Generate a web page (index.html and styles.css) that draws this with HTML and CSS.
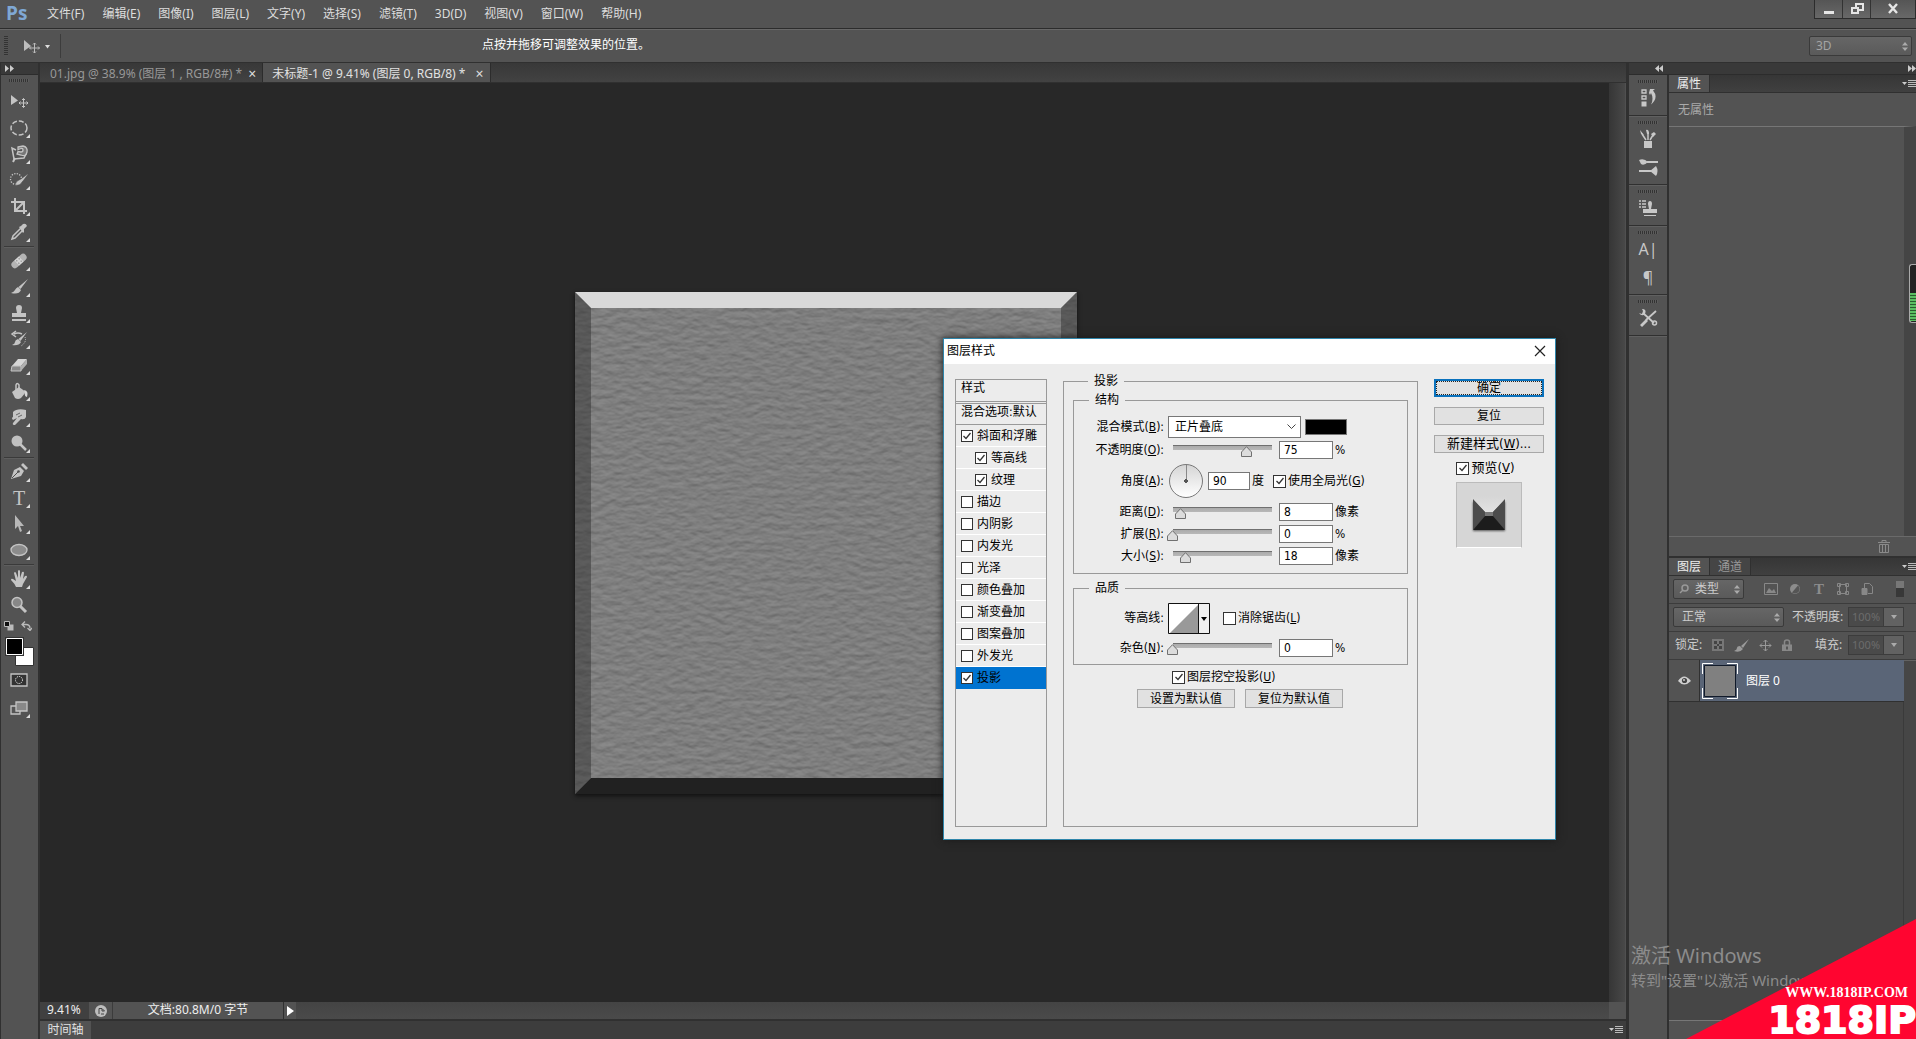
FILE: index.html
```html
<!DOCTYPE html>
<html lang="zh-CN">
<head>
<meta charset="utf-8">
<title>未标题-1 @ 9.41%</title>
<link rel="stylesheet" href="styles.css">
</head>
<body>
<div class="app">
  <header class="menubar">
    <span class="logo">Ps</span>
    <nav class="menus">
      <button>文件(F)</button><button>编辑(E)</button><button>图像(I)</button><button>图层(L)</button><button>文字(Y)</button><button>选择(S)</button><button>滤镜(T)</button><button>3D(D)</button><button>视图(V)</button><button>窗口(W)</button><button>帮助(H)</button>
    </nav>
    <div class="window-buttons">
      <button aria-label="最小化"><svg width="12" height="12"><path d="M1 9.500h10" stroke="#e6e6e6" stroke-width="3"/></svg></button>
      <button aria-label="还原"><svg width="14" height="12" fill="none" stroke="#e6e6e6" stroke-width="2"><path d="M6 5V1h7v6H9"/><path d="M2 5h6v5H2z"/></svg></button>
      <button class="wide" aria-label="关闭"><svg width="12" height="12"><path d="M2 1l8 9M10 1l-8 9" stroke="#e6e6e6" stroke-width="2.400"/></svg></button>
    </div>
  </header>

  <div class="options">
    <i class="grip-v"></i>
    <button class="current-tool" aria-label="移动工具"><svg width="32" height="16"><path d="M2 1v11l7-5z" fill="#bdbdbd"/><path d="M12.500 4v10M7.500 9h10M11 5.500L12.500 4 14 5.500M11 12.500l1.500 1.500 1.500-1.500M9 7.500L7.500 9 9 10.500M16 7.500L17.500 9 16 10.500" fill="none" stroke="#bdbdbd"/><path d="M23 6h5l-2.500 3.500z" fill="#ddd"/></svg></button>
    <p class="hint">点按并拖移可调整效果的位置。</p>
    <select class="dark-select workspace" aria-label="工作区"><option>3D</option></select>
  </div>

  <div class="main">
    <aside class="tools">
      <div class="strip"><svg width="9" height="7" fill="#ccc"><path d="M0 0l4 3.500-4 3.500zM5 0l4 3.500-4 3.500z"/></svg></div>
      <i class="grip-h"></i>
      <div class="tool-group">
        <button aria-label="移动"><svg class="ic" viewBox="0 0 20 20"><path d="M2 3v10l7-4.500z" fill="#c4c4c4"/><path d="M14.500 6.500v9M10 11h9M13 8l1.500-1.500L16 8M13 14l1.500 1.500L16 14M11.500 9.500L10 11l1.500 1.500M17.500 9.500L19 11l-1.500 1.500" fill="none" stroke="#c4c4c4"/></svg></button>
        <button class="more" aria-label="椭圆选框"><svg class="ic" viewBox="0 0 20 20"><ellipse cx="10" cy="10" rx="8" ry="7" fill="none" stroke="#c4c4c4" stroke-width="1.500" stroke-dasharray="5 2"/></svg></button>
        <button class="more" aria-label="套索"><svg class="ic" viewBox="0 0 20 20" fill="none" stroke="#c4c4c4"><path d="M7 6L3 4l2 11 10-1 2-4" stroke-width="1.500"/><path d="M9 3l5-1q5 1 4 6t-6 3l-4-1 1-2.500 3 .5q2 0 2-2t-2-1.500l-3 1z" fill="#777" stroke-width="1.300"/><path d="M6 14l-2 4" stroke-width="2"/></svg></button>
        <button class="more" aria-label="快速选择"><svg class="ic" viewBox="0 0 20 20"><circle cx="7" cy="9" r="5.500" fill="none" stroke="#c4c4c4" stroke-width="1.300" stroke-dasharray="1.300 1.300"/><path d="M20 3l-8 6-2 1q-3 1-4 5 5 1 7-3l1-1z" fill="#c4c4c4" stroke="#444" stroke-width=".5"/></svg></button>
        <button class="more" aria-label="裁剪"><svg class="ic" viewBox="0 0 20 20"><path d="M6 2v13h12M2 6h13v12M7 14l8-8" fill="none" stroke="#c4c4c4" stroke-width="2"/></svg></button>
        <button class="more" aria-label="吸管"><svg class="ic" viewBox="0 0 20 20"><path d="M3 17l1-3 8-8 2 2-8 8z" fill="none" stroke="#c4c4c4" stroke-width="1.500"/><path d="M10 5l2-1 2-2q3-1 4 2l-3 3v3l-1 1z" fill="#c4c4c4"/></svg></button>
      </div>
      <div class="tool-group">
        <button class="more" aria-label="修复画笔"><svg class="ic" viewBox="0 0 20 20"><g transform="rotate(-42 10 10)"><rect x="1" y="6.500" width="18" height="7" rx="3.500" fill="#b4b4b4"/><path d="M7 6.500h6v7H7z" fill="#d5d5d5"/><path d="M8 8.500h4M8 11.500h4" stroke="#555" stroke-dasharray="1 2"/></g></svg></button>
        <button class="more" aria-label="画笔"><svg class="ic" viewBox="0 0 20 20"><path d="M19 2l-9.500 8 2 2zM9 10l3 3q-2 5-10 3 3-1 4-3t3-3z" fill="#c4c4c4"/></svg></button>
        <button class="more" aria-label="仿制图章"><svg class="ic" viewBox="0 0 20 20"><path d="M8 10l-1-5q0-3 3-3t3 3l-1 5h5v4H3v-4zM3 16h14v2H3z" fill="#c4c4c4"/></svg></button>
        <button class="more" aria-label="历史画笔"><svg class="ic" viewBox="0 0 20 20"><path d="M18 3l-8.500 7 2 2zM9 10l3 3q-2 4-9 3 3-1 3-3t3-3z" fill="#c4c4c4"/><path d="M13 5q-4-2-8 0M7 2L3 5l4 3" fill="none" stroke="#c4c4c4" stroke-width="1.500"/><path d="M16 8q2 5-4 9" fill="none" stroke="#c4c4c4" stroke-dasharray="1 1"/></svg></button>
        <button class="more" aria-label="橡皮擦"><svg class="ic" viewBox="0 0 20 20"><path d="M9 4h9l-6 7H3z" fill="#d6d6d6"/><path d="M3 11h9v5H2z" fill="#8a8a8a" stroke="#c4c4c4"/><path d="M12 11l6-7v5l-6 7z" fill="#b0b0b0"/></svg></button>
        <button class="more" aria-label="油漆桶"><svg class="ic" viewBox="0 0 20 20"><path d="M3 11l7-5 7 5-5 6q-3 2-6 0z" fill="#c4c4c4"/><path d="M7 9V4q1-3 3 0v6" fill="none" stroke="#c4c4c4" stroke-width="1.500"/><path d="M15 9q5 1 3 7-3-1-2-4z" fill="#d6d6d6"/></svg></button>
        <button class="more" aria-label="涂抹"><svg class="ic" viewBox="0 0 20 20"><path d="M4 5q4-4 13-2v7q-1 3-5 2l-6 6q-3 0-2-2l4-5-4 2q-2-2 0-3z" fill="#c4c4c4"/><path d="M7 8l4-2M9 10l4-2" stroke="#666"/></svg></button>
        <button class="more" aria-label="减淡"><svg class="ic" viewBox="0 0 20 20"><circle cx="8" cy="8" r="5.500" fill="#c0c0c0"/><path d="M11 11l6 6" stroke="#c4c4c4" stroke-width="2.500"/></svg></button>
      </div>
      <div class="tool-group">
        <button class="more" aria-label="钢笔"><svg class="ic" viewBox="0 0 20 20"><path d="M2 17l3-9 6-3 4 4-3 5z" fill="#c4c4c4"/><path d="M12 3l2-2 5 5-2 2z" fill="#c4c4c4"/><path d="M3 16l6-6" stroke="#505050"/><circle cx="9.500" cy="9.500" r="1.300" fill="#505050"/></svg></button>
        <button class="more type" aria-label="文字">T</button>
        <button class="more" aria-label="路径选择"><svg class="ic" viewBox="0 0 20 20"><path d="M6 1v14l3-3 2 6 2-1-2-5h4z" fill="#b8b8b8"/></svg></button>
        <button class="more" aria-label="椭圆"><svg class="ic" viewBox="0 0 20 20"><ellipse cx="10" cy="10" rx="8" ry="5.500" fill="#8c8c8c" stroke="#c4c4c4" stroke-width="1.300"/></svg></button>
      </div>
      <div class="tool-group open">
        <button class="more" aria-label="抓手"><svg class="ic" viewBox="0 0 20 20"><path d="M7 18q-1-3-5-7 0-2 2-1l3 2-2-8q1-2 2 0l2 5V2q1-2 2 0v7l2-6q2-1 2 1l-1 6 2-3q2-1 2 1l-4 7-1 3z" fill="#c4c4c4"/></svg></button>
        <button aria-label="缩放"><svg class="ic" viewBox="0 0 20 20"><path d="M11 11l6 6" stroke="#c4c4c4" stroke-width="3"/><circle cx="8" cy="7.500" r="5" fill="#888" stroke="#c4c4c4" stroke-width="1.500"/></svg></button>
      </div>
      <div class="color-mini">
        <svg width="10" height="10"><path d="M3.500 3.500h6v6h-6z" fill="#bbb"/><path d="M.5.500h5v5h-5z" fill="#111" stroke="#bbb"/></svg>
        <svg width="11" height="10" fill="none" stroke="#bbb" stroke-width="1.300"><path d="M1 3.500h4q4 0 4 4M4 .5l-3 3 3 3M6.500 7L9 9.500 11 7"/></svg>
      </div>
      <svg class="swatches" width="30" height="30"><path d="M10.500 10.500h18v18h-18z" fill="#fff" stroke="#333"/><path d="M0 0h19v19H0z" fill="#333"/><path d="M1.500 1.500h16v16h-16z" fill="#000" stroke="#fff"/></svg>
      <div class="tool-group open last">
        <button aria-label="快速蒙版"><svg class="ic" viewBox="0 0 20 20"><path d="M2 4h16v12H2z" fill="#333" stroke="#c4c4c4" stroke-width="1.300"/><circle cx="10" cy="10" r="3.500" fill="none" stroke="#fff" stroke-dasharray="1 1"/></svg></button>
        <button class="more" aria-label="屏幕模式"><svg class="ic" viewBox="0 0 20 20" stroke="#c4c4c4" stroke-width="1.300"><path d="M2 8h9v8H2z" fill="#555"/><path d="M7 4h11v9H7z" fill="#888"/></svg></button>
      </div>
    </aside>

    <main class="workspace-area">
      <div class="doc-tabs">
        <div class="doc-tab"><span>01.jpg @ 38.9% (图层 1 , RGB/8#) *</span><button aria-label="关闭">×</button></div>
        <div class="doc-tab active"><span>未标题-1 @ 9.41% (图层 0, RGB/8) *</span><button aria-label="关闭">×</button></div>
      </div>
      <div class="doc">
        <div class="canvas">
          <svg class="art" viewBox="0 0 502 502">
            <defs>
              <filter id="stone" x="0" y="0" width="100%" height="100%" color-interpolation-filters="sRGB">
                <feTurbulence type="fractalNoise" baseFrequency=".09 .17" numOctaves="3" seed="8" result="n"/>
                <feDiffuseLighting in="n" surfaceScale="1" lighting-color="#fff" result="l"><feDistantLight azimuth="270" elevation="40"/></feDiffuseLighting>
                <feColorMatrix type="matrix" values=".24 0 0 0 .34 .24 0 0 0 .34 .24 0 0 0 .34 0 0 0 0 1"/>
              </filter>
            </defs>
            <path d="M0 0h502v502H0z" fill="#7d7d7d" filter="url(#stone)"/>
            <path d="M0 0h502l-16 16H16z" fill="#d9d9d9"/>
            <path d="M0 0l16 16v470L0 502z" fill="#2a2a2a" fill-opacity=".45"/>
            <path d="M502 0l-16 16v470l16 16z" fill="#2a2a2a" fill-opacity=".45"/>
            <path d="M0 502l16-16h470l16 16z" fill="#212121"/>
          </svg>
        </div>
        <div class="vscroll"></div>
      </div>
      <div class="status">
        <span class="zoom">9.41%</span>
        <span class="status-icon"><svg width="12" height="12"><circle cx="6" cy="6" r="6" fill="#bdbdbd"/><path d="M4 3.500V9M4 3.500h3L9.500 6H7V4M6 9h3" fill="none" stroke="#444"/></svg></span>
        <span class="docsize">文档:80.8M/0 字节</span>
        <button aria-label="状态栏菜单"><svg width="7" height="10"><path d="M0 0l7 5-7 5z" fill="#fff"/></svg></button>
        <span class="hscroll"></span><span class="corner"></span>
      </div>
      <div class="timeline"><button>时间轴</button><svg class="flyout" width="14" height="8"><path d="M0 2h5L2.500 5z" fill="#ccc"/><path d="M6 .5h8M6 2.500h8M6 4.500h8M6 6.500h8" stroke="#bbb"/></svg></div>
    </main>

    <aside class="right">
      <div class="strip dock-strip"><svg width="8" height="7" fill="#ccc"><path d="M4 0L0 3.500 4 7zM8 0L4 3.500 8 7z"/></svg><svg width="8" height="7" fill="#ccc"><path d="M0 0l4 3.500L0 7zM4 0l4 3.500L4 7z"/></svg></div>
      <div class="docks">
        <div class="icon-dock">
          <div class="dock-group"><i class="grip-h"></i>
            <button aria-label="历史记录"><svg class="ic" viewBox="0 0 20 20"><path d="M4 2h4v3H4zM4 8h4v3H4z" fill="none" stroke="#c8c8c8" stroke-width="1.300"/><path d="M3.500 13.500h5v5h-5zM11 5l1-4h5l-2 1.500q6 7-2 14 3-6 0-11.500l-1 2z" fill="#c8c8c8"/></svg></button></div>
          <div class="dock-group"><i class="grip-h"></i>
            <button aria-label="画笔预设"><svg class="ic" viewBox="0 0 20 20"><path d="M6 12h8v7H6z" fill="#c8c8c8"/><path d="M8 11L4 5M10 11V3M12 11l3-5" stroke="#c8c8c8" stroke-width="1.500"/><path d="M2 1l4 5-3-1zM8 1q3-1 3 4H9zM13 5l3-2 2 2-3 3z" fill="#c8c8c8"/></svg></button>
            <button aria-label="画笔"><svg class="ic" viewBox="0 0 20 20"><path d="M9 5h11M1 14h12" stroke="#c8c8c8" stroke-width="2"/><path d="M1 3q5-2 9 2-4 4-7 2zM12 14l6-5q3 5 0 10z" fill="#c8c8c8"/></svg></button></div>
          <div class="dock-group"><i class="grip-h"></i>
            <button aria-label="仿制源"><svg class="ic" viewBox="0 0 20 20"><path d="M1 3h2M1 6h2M1 9h2M4 3h4M4 6h4M4 9h4" stroke="#c8c8c8" stroke-width="1.300"/><path d="M11 11l-1-5q0-3 2-3t2 3l-1 5h6v4H5v-4zM6 17h12v1H6z" fill="#c8c8c8"/></svg></button></div>
          <div class="dock-group"><i class="grip-h"></i>
            <button class="char" aria-label="字符">A|</button>
            <button class="char" aria-label="段落">¶</button></div>
          <div class="dock-group"><i class="grip-h"></i>
            <button aria-label="工具预设"><svg class="ic" viewBox="0 0 20 20"><path d="M5 5l11 10M18 3L8 12" stroke="#c8c8c8" stroke-width="1.800"/><path d="M8 11l-6 6 2 2 6-6zM1 5l3 1 1-3-1-2q5 0 3 5-3 3-6-1z" fill="#c8c8c8"/><circle cx="16.500" cy="15" r="2" fill="none" stroke="#c8c8c8" stroke-width="1.500"/></svg></button></div>
        </div>

        <div class="panels">
          <section class="properties">
            <div class="panel-tabs"><button class="on">属性</button><svg class="flyout" width="14" height="8"><path d="M0 2h5L2.500 5z" fill="#ccc"/><path d="M6 .5h8M6 2.500h8M6 4.500h8M6 6.500h8" stroke="#bbb"/></svg></div>
            <p class="no-props">无属性</p>
            <div class="props-body"></div>
            <div class="props-foot"><svg width="12" height="13" fill="none" stroke="#8a8a8a"><path d="M0 2.500h12M4 2V.5h4V2M1.500 4.500h9v8h-9zM4.500 5v7M7.500 5v7"/></svg></div>
          </section>
          <section class="layers">
            <div class="panel-tabs"><button class="on">图层</button><button>通道</button><svg class="flyout" width="14" height="8"><path d="M0 2h5L2.500 5z" fill="#ccc"/><path d="M6 .5h8M6 2.500h8M6 4.500h8M6 6.500h8" stroke="#bbb"/></svg></div>
            <div class="row">
              <div class="kind"><svg width="10" height="10" fill="none" stroke="#999" stroke-width="1.500"><circle cx="6" cy="4" r="3"/><path d="M4 6L1 9"/></svg><select class="dark-select" aria-label="筛选类型"><option>类型</option></select></div>
              <div class="filters">
                <svg width="14" height="14" fill="#888"><path d="M.5 1.500h13v11H.5z" fill="none" stroke="#888"/><path d="M2 11l3-5 3 3 2-2 2 4z"/></svg>
                <svg width="14" height="14"><circle cx="7" cy="7" r="5" fill="#8c8c8c"/><path d="M10 3.500L4 10.500a4.500 4.500 0 0 0 6-7z" fill="#555"/></svg>
                <span class="tfilter">T</span>
                <svg width="14" height="14" fill="none" stroke="#888"><path d="M3.500 2.500h7v9h-7zM1.500 1.500h3v3h-3zM9.500 1.500h3v3h-3zM1.500 9.500h3v3h-3zM9.500 9.500h3v3h-3z"/></svg>
                <svg width="14" height="14" fill="none" stroke="#888"><path d="M4.500 6V1.500h5l3 3v7H8"/><path d="M2 6.500h5v6H2z" fill="#888"/></svg>
              </div>
              <i class="toggle"></i>
            </div>
            <div class="row">
              <select class="dark-select blend" aria-label="混合模式"><option>正常</option></select>
              <label for="op">不透明度:</label><span class="combo"><input id="op" value="100%" disabled><button disabled aria-label="不透明度滑块"><svg width="6" height="4"><path d="M0 0h6L3 4z" fill="#aaa"/></svg></button></span>
            </div>
            <div class="row">
              <span class="lock-label">锁定:</span>
              <div class="locks">
                <svg width="12" height="12"><path d="M0 0h12v12H0z" fill="#777"/><path d="M2 2h3v3H2zM7 2h3v3H7zM5 5h2v2H5zM2 7h3v3H2zM7 7h3v3H7z" fill="#444"/></svg>
                <svg width="15" height="13"><path d="M15 0L7 7l2 2zM6 7l3 3q-3 4-9 2 3-1 3-3t3-2z" fill="#9a9a9a"/></svg>
                <svg width="13" height="13" fill="none" stroke="#999"><path d="M6.500 1v11M1 6.500h11M4.500 3l2-2 2 2M4.500 10l2 2 2-2M3 4.500l-2 2 2 2M10 4.500l2 2-2 2"/></svg>
                <svg width="10" height="13"><path d="M2.500 6V3q0-2 2.500-2t2.500 2v3" fill="none" stroke="#888" stroke-width="1.500"/><path d="M0 5.500h10V12H0z" fill="#888"/><path d="M5 7.500v3" stroke="#444" stroke-width="1.500"/></svg>
              </div>
              <label for="fill">填充:</label><span class="combo"><input id="fill" value="100%" disabled><button disabled aria-label="填充滑块"><svg width="6" height="4"><path d="M0 0h6L3 4z" fill="#aaa"/></svg></button></span>
            </div>
            <div class="layer">
              <button class="eye" aria-label="可见性"><svg width="13" height="9"><path d="M0 5q6-9 13 0-7 7-13 0z" fill="#d0d0d0"/><circle cx="6.500" cy="4.500" r="2.600" fill="#444"/><circle cx="6" cy="4" r="1" fill="#ccc"/></svg></button>
              <div class="layer-name"><svg width="38" height="38"><path d="M1.500 12V1.500H12M26 1.500h10.500V12M36.500 26v10.500H26M12 36.500H1.500V26" fill="none" stroke="#fff"/><path d="M3.500 3.500h31v31h-31z" fill="#808080" stroke="#111a2a"/></svg><span>图层 0</span></div>
            </div>
            <div class="layers-empty"></div>
            <div class="layers-foot"></div>
          </section>
        </div>
      </div>
    </aside>
  </div>

  <div class="meter"><i></i></div>
  <div class="activate"><p class="big">激活 Windows</p><p>转到"设置"以激活 Windows。</p></div>
  <div class="badge"><p class="url">WWW.1818IP.COM</p><p class="brand">1818IP</p></div>

  <form class="dialog" role="dialog" aria-label="图层样式">
    <div class="title"><span>图层样式</span><button type="button" aria-label="关闭"><svg width="12" height="12"><path d="M1 1l10 10M11 1L1 11" stroke="#222" stroke-width="1.200"/></svg></button></div>
    <div class="body">
      <div class="styles">
        <div class="styles-head">样式</div>
        <div class="styles-blend">混合选项:默认</div>
        <label><input type="checkbox" checked>斜面和浮雕</label>
        <label class="sub"><input type="checkbox" checked>等高线</label>
        <label class="sub"><input type="checkbox" checked>纹理</label>
        <label><input type="checkbox">描边</label>
        <label><input type="checkbox">内阴影</label>
        <label><input type="checkbox">内发光</label>
        <label><input type="checkbox">光泽</label>
        <label><input type="checkbox">颜色叠加</label>
        <label><input type="checkbox">渐变叠加</label>
        <label><input type="checkbox">图案叠加</label>
        <label><input type="checkbox">外发光</label>
        <label class="selected"><input type="checkbox" checked>投影</label>
      </div>
      <fieldset class="shadow">
        <legend>投影</legend>
        <fieldset class="structure">
          <legend>结构</legend>
          <div class="line first"><label class="lb" for="mode">混合模式(<u>B</u>):</label><select id="mode" class="mode"><option>正片叠底</option></select><button type="button" class="ink" aria-label="阴影颜色"></button></div>
          <div class="line"><label class="lb" for="opacity">不透明度(<u>O</u>):</label><input type="range" value="75" aria-label="不透明度"><input class="num" id="opacity" value="75"><span class="unit">%</span></div>
          <div class="line tall"><label class="lb" for="angle">角度(<u>A</u>):</label><i class="dial"></i><input class="num short" id="angle" value="90"><span class="unit">度</span><label class="tick global"><input type="checkbox" checked><span>使用全局光(<u>G</u>)</span></label></div>
          <div class="line"><label class="lb" for="dist">距离(<u>D</u>):</label><input type="range" value="8" aria-label="距离"><input class="num" id="dist" value="8"><span class="unit">像素</span></div>
          <div class="line"><label class="lb" for="spread">扩展(<u>R</u>):</label><input type="range" value="0" aria-label="扩展"><input class="num" id="spread" value="0"><span class="unit">%</span></div>
          <div class="line"><label class="lb" for="size">大小(<u>S</u>):</label><input type="range" value="18" max="138" aria-label="大小"><input class="num" id="size" value="18"><span class="unit">像素</span></div>
        </fieldset>
        <fieldset class="quality">
          <legend>品质</legend>
          <div class="line tall"><span class="lb">等高线:</span><button type="button" class="contour" aria-label="等高线"><svg width="42" height="31"><path d="M.5.500h41v30H.5z" fill="#fff" stroke="#111"/><path d="M2 30L30 2v28z" fill="#999"/><path d="M31 1h10v29H31z" fill="#f0f0f0"/><path d="M30.500 1v29" stroke="#111"/><path d="M33 14h6l-3 4z" fill="#000"/></svg></button><label class="tick alias"><input type="checkbox"><span>消除锯齿(<u>L</u>)</span></label></div>
          <div class="line noise"><label class="lb" for="noise">杂色(<u>N</u>):</label><input type="range" value="0" aria-label="杂色"><input class="num" id="noise" value="0"><span class="unit">%</span></div>
        </fieldset>
        <label class="tick knock"><input type="checkbox" checked><span>图层挖空投影(<u>U</u>)</span></label>
        <div class="defaults"><button type="button">设置为默认值</button><button type="button">复位为默认值</button></div>
      </fieldset>
      <div class="actions">
        <button type="button" class="ok">确定</button>
        <button type="button">复位</button>
        <button type="button" class="new-style">新建样式(<u>W</u>)...</button>
        <label class="tick preview"><input type="checkbox" checked><span>预览(<u>V</u>)</span></label>
        <div class="thumb"><svg width="36" height="38"><defs><filter id="soft" x="-20%" y="-20%" width="140%" height="140%"><feGaussianBlur stdDeviation="1"/></filter><linearGradient id="shine" x2="0" y2="1"><stop stop-color="#d6d6d6"/><stop offset="1" stop-color="#e2e2e2"/></linearGradient></defs><path d="M2 6h32v29H2z" fill="#555" filter="url(#soft)"/><path d="M0 0h36v4h-2L22 16h-8L2 4H0z" fill="url(#shine)"/><path d="M2 3l12 13v4L2 34z" fill="#4c4c4c"/><path d="M34 3L22 16v4l12 14z" fill="#4c4c4c"/><path d="M14 16h8v4h-8z" fill="#777"/><path d="M2 34l12-14h8l12 14z" fill="#1c1c1c"/></svg></div>
      </div>
    </div>
  </form>
</div>
</body>
</html>
```
FILE: styles.css
```css
* { box-sizing: border-box; }
html, body { height: 100%; }
body { margin: 0; overflow: hidden; background: #535353; color: #ddd; font: 12px/16px "Noto Sans", "Noto Sans CJK SC", sans-serif; }
p { margin: 0; }
button { margin: 0; padding: 0; border: 0; background: none; color: inherit; font: inherit; }
input, select { margin: 0; font: inherit; color: inherit; }
svg { display: block; flex: none; }

.app { position: relative; display: flex; flex-direction: column; height: 100vh; overflow: hidden; }

.menubar { display: flex; flex: none; height: 29px; border-bottom: 1px solid #2c2c2c; }
.logo { width: 38px; padding-left: 6px; color: #7fa8d4; font: bold 19px/27px "Open Sans", sans-serif; }
.menus { display: flex; flex: 1; }
.menus button { padding: 0 9px; }
.window-buttons { display: flex; width: 102px; height: 19px; border: 1px solid #2c2c2c; border-top: 0; background: linear-gradient(#555, #686868); }
.window-buttons button { display: grid; place-items: center; width: 28px; border-right: 1px solid #333; }
.window-buttons .wide { flex: 1; border: 0; }

.options { display: flex; flex: none; align-items: center; height: 34px; padding: 0 4px; border-top: 1px solid #686868; border-bottom: 1px solid #303030; }
.grip-v { width: 4px; height: 20px; background: repeating-linear-gradient(#333 0 1px, #555 1px 2px); }
.current-tool { width: 53px; height: 24px; padding: 2px 14px 0; border-right: 1px solid #3c3c3c; }
.current-tool svg { overflow: visible; }
.hint { flex: 1; padding: 0 0 2px 421px; color: #fff; }
.dark-select { height: 20px; padding: 0 8px; border: 1px solid #3a3a3a; border-radius: 2px; background: url("data:image/svg+xml,%3Csvg xmlns='http://www.w3.org/2000/svg' width='6' height='9'%3E%3Cpath d='M3 0l3 3.500H0zM3 9l3-3.500H0z' fill='%23aaa'/%3E%3C/svg%3E") no-repeat right 3px center, linear-gradient(#666, #5a5a5a); color: #ccc; appearance: none; }
.workspace { width: 103px; color: #a4a4a4; padding: 0 6px; }

.main { display: flex; flex: 1; min-height: 0; }
.strip { display: flex; flex: none; align-items: center; height: 12px; padding: 0 4px; border-bottom: 1px solid #2c2c2c; background: #393939; }
.grip-h { display: block; flex: none; width: 20px; height: 3px; margin: 4px auto; background: repeating-linear-gradient(90deg, #333 0 1px, #5c5c5c 1px 2px); }

.tools { display: flex; flex: none; flex-direction: column; width: 40px; border-right: 2px solid #303030; border-left: 1px solid #303030; }
.tools .grip-h { margin: 4px 8px 7px; }
.tool-group { display: flex; flex-direction: column; margin: 0 4px 0 3px; padding-bottom: 1px; border-bottom: 1px solid #3a3a3a; box-shadow: 0 1px #5e5e5e; }
.tool-group + .tool-group { padding-top: 1px; }
.tool-group.open { border: 0; box-shadow: none; }
.tool-group button, .dock-group button { position: relative; display: grid; place-items: center; height: 26px; }
.ic { width: 20px; height: 20px; }
.more::after { content: ""; position: absolute; right: 4px; bottom: 3px; border: 2px solid; border-color: transparent #ddd #ddd transparent; }
.tool-group .type { color: #c4c4c4; font: 20px "Liberation Serif", serif; }
.color-mini { display: flex; justify-content: space-between; height: 16px; margin: 2px 6px 0 3px; }
.swatches { margin: 0 4px; }
.tool-group.last { gap: 2px; }

.workspace-area { display: flex; flex: 1; flex-direction: column; min-width: 0; }
.doc-tabs { display: flex; flex: none; height: 20px; background: linear-gradient(#383838, #424242); border-bottom: 1px solid #303030; }
.doc-tab { display: flex; align-items: center; gap: 6px; padding: 2px 6px 0 10px; border-right: 1px solid #2c2c2c; color: #989898; }
.doc-tab.active { gap: 10px; padding: 2px 7px 0 9px; background: #535353; color: #e2e2e2; }
.doc-tab button { color: #ddd; font-size: 14px; line-height: 14px; }
.doc { display: flex; flex: 1; min-height: 0; }
.canvas { display: grid; flex: 1; place-items: center; overflow: hidden; background: #282828; }
.art { width: 502px; height: 502px; margin-left: 3px; box-shadow: 0 2px 4px #111; }
.vscroll { width: 17px; border-right: 1px solid #505050; background: linear-gradient(90deg, #363636, #484848); }
.status { display: flex; flex: none; height: 18px; border-bottom: 1px solid #303030; background: #484848; color: #eee; line-height: 16px; }
.zoom { width: 49px; padding-left: 7px; background: #404040; }
.status-icon { display: grid; place-items: center; width: 24px; border-right: 1px solid #3c3c3c; background: #535353; }
.docsize { width: 170px; background: #535353; text-align: center; }
.status button { display: grid; place-items: center; width: 13px; border-left: 1px solid #303030; background: #535353; }
.hscroll { flex: 1; background: linear-gradient(#444, #4a4a4a); }
.corner { width: 17px; background: #535353; }
.timeline { display: flex; flex: none; align-items: center; justify-content: space-between; height: 19px; border-top: 1px solid #303030; background: #3d3d3d; }
.timeline button { width: 51px; height: 18px; background: #535353; color: #e2e2e2; }
.flyout { margin-right: 3px; }

.right { display: flex; flex: none; flex-direction: column; width: 290px; border-left: 3px solid #303030; }
.dock-strip { justify-content: space-between; padding: 0 0 0 26px; }
.docks { display: flex; flex: 1; min-height: 0; }
.icon-dock { display: flex; flex: none; flex-direction: column; width: 40px; border-right: 2px solid #303030; }
.dock-group { border-bottom: 1px solid #303030; box-shadow: 0 1px #606060; padding-bottom: 3px; }
.dock-group .grip-h { margin: 5px auto 1px; }
.dock-group button { width: 100%; height: 28px; }
.dock-group .char { color: #c8c8c8; font-size: 16px; }

.panels { display: flex; flex: 1; flex-direction: column; min-width: 0; }
.panel-tabs { display: flex; flex: none; height: 18px; align-items: center; border-bottom: 1px solid #303030; background: linear-gradient(#363636, #404040); }
.panel-tabs button { height: 17px; padding: 0 8px; border-right: 1px solid #303030; background: #454545; color: #999; line-height: 16px; }
.panel-tabs .on { background: #535353; color: #eee; }
.panel-tabs .flyout { margin: 0 0 0 auto; }
.properties { display: flex; flex: 0 0 481px; flex-direction: column; }
.no-props { height: 33px; padding: 9px; color: #aaa; }
.props-body { flex: 1; border-top: 1px solid #767676; border-right: 12px solid #454545; }
.props-foot { display: flex; height: 20px; align-items: center; justify-content: flex-end; padding-right: 26px; border-top: 1px solid #6a6a6a; }
.layers { display: flex; flex: 1; flex-direction: column; min-height: 0; border-top: 2px solid #303030; background: #464646; }
.row { display: flex; flex: none; align-items: center; height: 28px; padding: 0 12px 1px 4px; border-bottom: 1px solid #3c3c3c; box-shadow: 0 1px #626262; color: #ccc; }
.layers .row, .layers .eye { background: #535353; }
.kind { display: grid; }
.kind > * { grid-area: 1 / 1; }
.kind svg { z-index: 1; align-self: center; margin-left: 6px; }
.kind select { width: 71px; padding-left: 21px; }
.filters { display: flex; flex: 1; gap: 10px; padding-left: 20px; }
.tfilter { width: 14px; color: #8c8c8c; font: bold 15px/15px "Liberation Serif", serif; text-align: center; }
.toggle { width: 8px; height: 16px; border-top: 7px solid #777; background: #383838; }
.blend { width: 111px; margin-right: 8px; }
.row label { flex: 1; white-space: nowrap; }
.combo { display: flex; height: 20px; }
.combo input { width: 36px; padding: 0 3px; border: 1px solid #3c3c3c; background: #4a4a4a; color: #6c6c6c; font-size: 11px; }
.combo button { display: grid; place-items: center; width: 20px; border: 1px solid #3c3c3c; border-left: 0; background: #626262; }
.lock-label { width: 39px; padding-left: 2px; }
.locks { display: flex; flex: 1; gap: 10px; align-items: center; }
.locks + label { flex: none; width: 33px; }
.layer { display: flex; flex: none; height: 42px; margin-right: 12px; border-bottom: 1px solid #303030; }
.eye { display: grid; place-items: center; width: 30px; }
.layer-name { display: flex; flex: 1; align-items: center; gap: 7px; border-left: 1px solid #303030; padding-left: 1px; background: #5a6577; color: #fff; }
.layers-empty { flex: 1; margin-right: 12px; border-right: 1px solid #3a3a3a; }
.layers-foot { flex: none; height: 19px; border-top: 1px solid #777; background: #535353; }

.meter { position: absolute; top: 264px; right: 0; width: 7px; height: 59px; padding-top: 28px; border: 1px solid #aaa; border-right: 0; border-radius: 3px 0 0 3px; background: #222; }
.meter i { display: block; height: 28px; background: repeating-linear-gradient(#5bbf62 0 2px, #2a5c2e 2px 3px); }
.activate { position: absolute; right: 0; bottom: 48px; width: 285px; color: #8c8c8c; font-size: 15px; line-height: 22px; }
.activate .big { font-size: 20px; line-height: 26px; }
.badge { position: absolute; right: 0; bottom: 0; width: 230px; height: 120px; padding-top: 66px; background: #ff0530; clip-path: polygon(0 100%, 100% 0, 100% 100%); color: #fff; text-align: right; }
.url { padding-right: 8px; font: bold 14px/16px "Liberation Serif", serif; }
.brand { font: bold 38px/38px "DejaVu Sans", sans-serif; -webkit-text-stroke: 2px #fff; stroke-linejoin: round; }

.dialog { position: absolute; top: 338px; left: 943px; display: flex; flex-direction: column; width: 613px; height: 502px; border: 1px solid #2f86ab; background: #ececec; box-shadow: 0 0 8px #1a1a1a; color: #000; font-family: "DejaVu Sans Condensed", "Noto Sans CJK SC", sans-serif; }
.title { display: flex; flex: none; align-items: center; justify-content: space-between; height: 25px; padding: 0 9px 2px 3px; background: #fff; }
.body { display: flex; flex: 1; padding: 15px 11px 12px; }
.dialog input[type="checkbox"] { flex: none; width: 12px; height: 12px; border: 1px solid #333; background: #fff; appearance: none; }
.dialog input[type="checkbox"]:checked { background: #fff url("data:image/svg+xml,%3Csvg xmlns='http://www.w3.org/2000/svg' width='10' height='10'%3E%3Cpath d='M1.500 5l2.500 2.500L8.500 2' fill='none' stroke='%23333' stroke-width='1.300'/%3E%3C/svg%3E") center no-repeat; }
.styles { width: 92px; margin-right: 16px; border: 1px solid #999; white-space: nowrap; }
.styles-head { height: 22px; padding-left: 5px; border-bottom: 1px solid #999; }
.styles-blend { height: 22px; margin-top: 1px; padding: 0 5px; border-top: 1px solid #999; border-bottom: 1px solid #999; }
.styles label { display: flex; height: 22px; align-items: center; gap: 4px; padding-left: 5px; border-bottom: 1px solid #fff; }
.styles .sub { padding-left: 19px; }
.styles .selected { background: #0073d0; border-color: #0073d0; }
fieldset { min-width: 0; margin: 0; padding: 0; border: 1px solid #999; }
legend { height: 16px; margin-left: 15px; padding: 0 6px; }
.shadow { flex: 0 0 355px; margin-top: -6px; padding: 0 9px; }
.structure { height: 182px; margin-top: 3px; padding-top: 7px; }
.quality { height: 85px; margin-top: 6px; padding-top: 3px; }
.line { display: flex; align-items: center; height: 22px; }
.line.first { height: 24px; }
.line.tall { height: 40px; }
.quality .tall { height: 38px; }
.lb { width: 90px; margin-right: 4px; text-align: right; white-space: nowrap; }
.mode { width: 133px; height: 22px; padding: 0 6px; border: 1px solid #777; background: #fff url("data:image/svg+xml,%3Csvg xmlns='http://www.w3.org/2000/svg' width='9' height='6'%3E%3Cpath d='M.5.500l4 4 4-4' fill='none' stroke='%23444'/%3E%3C/svg%3E") no-repeat right 4px center; appearance: none; }
.ink { width: 42px; height: 16px; margin-left: 4px; border: 1px solid #777; background: #000; }
input[type="range"] { width: 110px; height: 18px; margin: 0 2px 0 -1px; appearance: none; background: linear-gradient(#707070, #707070) center 4px / 99px 1px no-repeat, linear-gradient(#a8a8a8, #b8b8b8) center 4px / 99px 5px no-repeat; }
input[type="range"]::-webkit-slider-thumb { width: 11px; height: 11px; margin-top: 3px; appearance: none; background: url("data:image/svg+xml,%3Csvg xmlns='http://www.w3.org/2000/svg' width='11' height='11'%3E%3Cpath d='M5.500.7L10.500 6v4.500H.5V6z' fill='%23dcdcdc' stroke='%23707070'/%3E%3C/svg%3E"); }
.num { width: 54px; height: 18px; padding: 0 4px; border: 1px solid #777; background: #fff; }
.unit { margin-left: 2px; }
.dial { width: 34px; height: 34px; margin-left: 1px; border: 1px solid #777; border-radius: 50%; background: radial-gradient(circle, #555 0 2px, transparent 2px), linear-gradient(#888, #888) center top / 1px 16px no-repeat, linear-gradient(#d5d5d5, #fff); }
.short { width: 42px; margin-left: 5px; }
.tick { display: flex; align-items: center; gap: 2px; white-space: nowrap; }
.dialog .tick input { width: 13px; height: 13px; }
.global { margin-left: 9px; }
.alias { margin-left: 13px; }
.knock { height: 20px; margin: 2px 0 2px 99px; }
.defaults { display: flex; gap: 10px; padding-left: 64px; }
.defaults button { width: 98px; height: 19px; }
.defaults button, .actions button { border: 1px solid #a8a8a8; background: #e1e1e1; line-height: 16px; }
.actions { display: flex; flex-direction: column; align-items: center; width: 110px; margin-left: 16px; }
.actions button { width: 100%; height: 18px; margin-bottom: 10px; }
.actions .ok { border: 2px solid #0a72bd; outline: 1px dotted #222; outline-offset: -3px; line-height: 14px; }
.actions .new-style, .preview { font-size: 13px; }
.preview { height: 16px; margin: -3px 7px 6px 0; }
.thumb { display: grid; place-items: center; width: 66px; height: 66px; border: 1px solid; border-color: #bbb #bbb #fff #bbb; background: #d6d6d6; }
```
